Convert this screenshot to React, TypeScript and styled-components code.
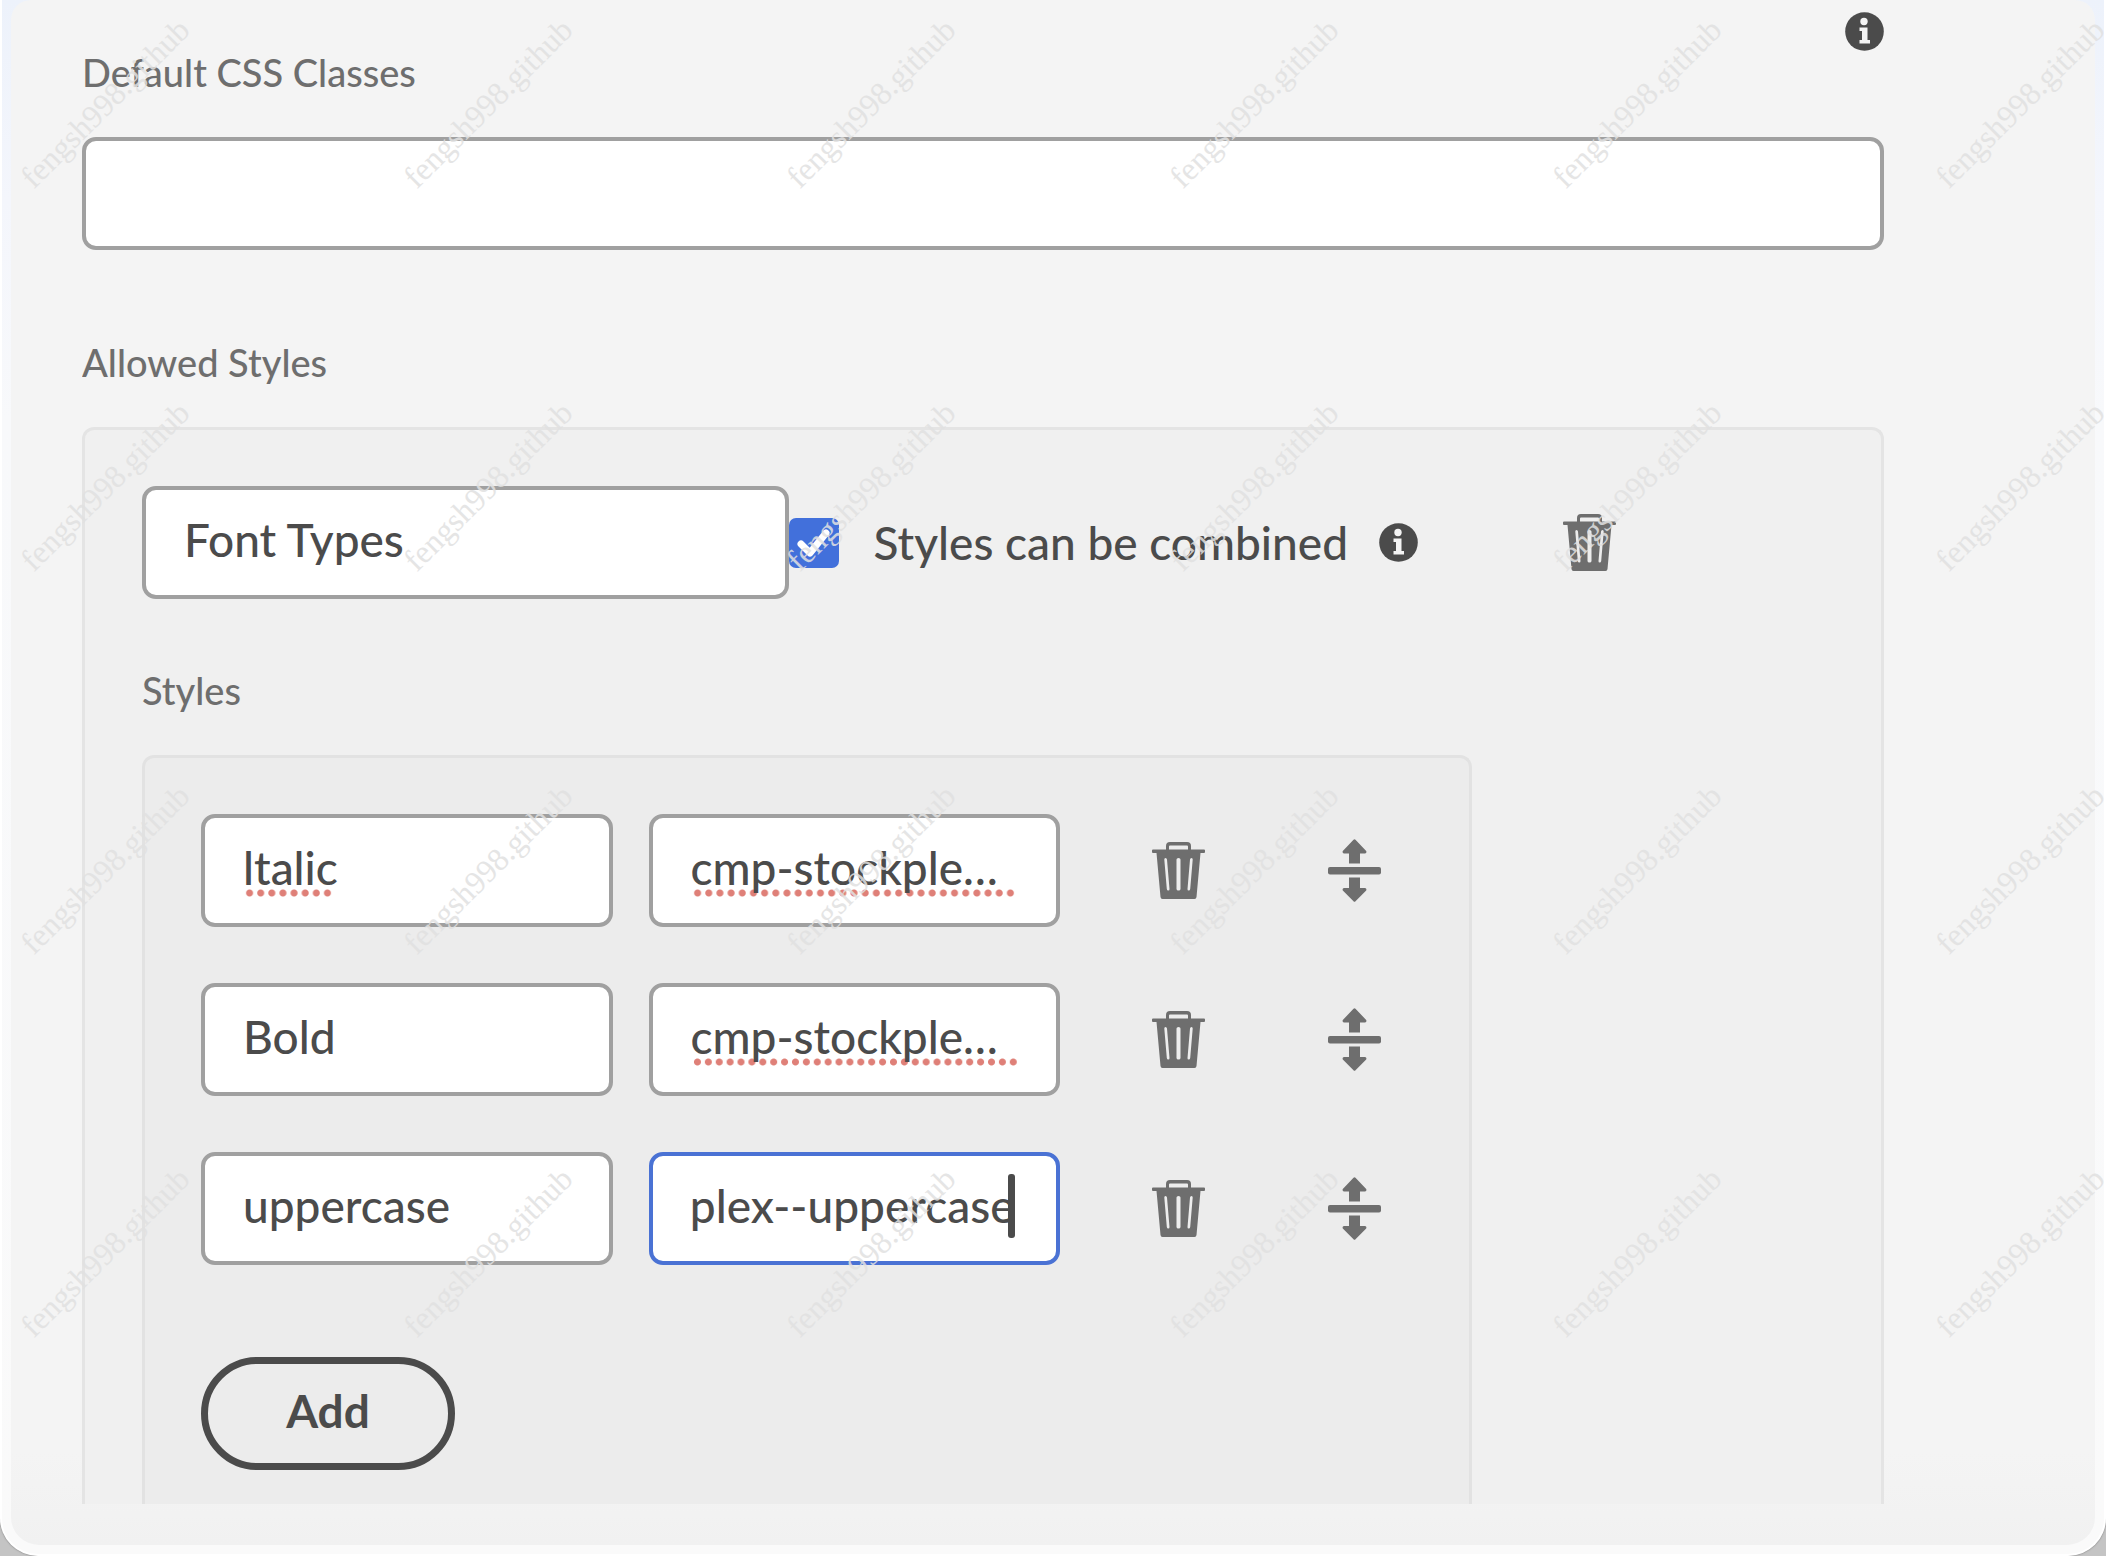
import React, { useEffect, useRef } from "react";
import styled, { createGlobalStyle } from "styled-components";

const GlobalStyle = createGlobalStyle`
  *, *::before, *::after { box-sizing: border-box; }
  body {
    margin: 0;
    background: #c4c4c4;
    font-family: Lato, "Open Sans", sans-serif;
    font-size: 46px;
    line-height: 56px;
    font-weight: 500;
    color: #4b4b4b;
  }
`;

const Window = styled.div`
  position: relative;
  display: flex;
  height: 100vh;
  padding: 0 9px 9px;
  overflow: hidden;
  border: 2px solid #ffffff;
  border-top: 0;
  border-radius: 0 0 38px 38px;
  background: linear-gradient(#edf2fb, #f4f6fc 200px, #f8f9fb 420px, #fafafa);
  box-shadow: 0 0 2px #6b6b6b;
`;

const Dialog = styled.main`
  flex: 1;
  min-width: 0;
  display: flex;
  flex-direction: column;
  padding: 0 211px 41px 71px;
  border-radius: 20px 20px 28px 28px;
  background: linear-gradient(#f4f4f4, #f4f4f4 94%, #f1f1f1);
`;

const Content = styled.form`
  flex: 1;
  min-height: 0;
  display: flex;
  flex-direction: column;
  overflow: hidden;
`;

const FieldHeader = styled.div`
  display: flex;
  justify-content: space-between;
  align-items: flex-start;
  padding: 12px 0 40px;
`;

const Label = styled.label`
  margin-top: 35px;
  font-size: 38px;
  line-height: 50px;
  color: #6e6e6e;
`;

const GroupTitle = styled.h2`
  margin: 0;
  padding: 87px 0 40px;
  font-size: 38px;
  line-height: 50px;
  font-weight: 500;
  color: #6e6e6e;
`;

const SubTitle = styled(GroupTitle)`
  padding-top: 66px;
`;

const FieldRow = styled.div`
  display: flex;
`;

const Field = styled.div<{ $focused?: boolean }>`
  position: relative;
  flex: 1;
  min-width: 0;
  display: flex;
  height: 113px;
  padding-right: ${(p) => (p.$focused ? "4px" : "0")};
  border: 4px solid ${(p) => (p.$focused ? "#4a72d4" : "#a0a0a0")};
  border-radius: 14px;
  background: #ffffff;
`;

const TextInput = styled.input`
  position: relative;
  flex: 1;
  min-width: 0;
  margin: 0 38px;
  padding: 0 0 6px;
  border: 0;
  outline: 0;
  background: transparent;
  font: inherit;
  color: inherit;
  caret-color: transparent;
`;

const Misspelling = styled.span<{ $width: number }>`
  position: absolute;
  left: 39px;
  top: 71px;
  width: ${(p) => p.$width}px;
  height: 8px;
  background: radial-gradient(circle, #df8078 3px, transparent 4px) 0 0 / 11px 8px round;
`;

const Caret = styled.span`
  position: absolute;
  right: 41px;
  top: 18px;
  width: 7px;
  height: 64px;
  border-radius: 3px;
  background: #4b4b4b;
`;

const Panel = styled.section`
  flex: 1;
  display: flex;
  flex-direction: column;
  padding: 56px 57px 0;
  border: 3px solid #e4e4e4;
  border-bottom: 0;
  border-radius: 12px 12px 0 0;
  background: #f0f0f0;
`;

const StylesPanel = styled(Panel)`
  margin-right: 352px;
  padding: 56px 88px 0 56px;
  border-color: #e2e2e2;
  background: #ececec;
`;

const GroupRow = styled.div`
  display: flex;
  align-items: center;
  padding-right: 208px;
`;

const CheckLabel = styled.label`
  display: flex;
  align-items: center;
  gap: 35px;
  margin-right: 31px;
  white-space: nowrap;
`;

const CheckMark = styled.span`
  position: relative;
  display: flex;
  width: 50px;
  height: 50px;
`;

const Checkbox = styled.input`
  appearance: none;
  width: 50px;
  height: 50px;
  margin: 0;
  border-radius: 7px;
  background: #4270db;
`;

const Tick = styled.svg`
  position: absolute;
  inset: 0;
  width: 50px;
  height: 50px;
  pointer-events: none;
`;

const IconButton = styled.button`
  display: flex;
  justify-content: center;
  flex: none;
  width: 53px;
  padding: 0;
  border: 0;
  background: none;
  color: #6e6e6e;
`;

const InfoButton = styled(IconButton)`
  width: 39px;
  color: #4b4b4b;
`;

const GroupDelete = styled(IconButton)`
  margin-left: 145px;
`;

const StyleList = styled.ul`
  display: flex;
  flex-direction: column;
  gap: 56px;
  margin: 0;
  padding: 0;
  list-style: none;
`;

const StyleItem = styled.li`
  display: flex;
  align-items: center;
`;

const Pair = styled.div`
  flex: 1;
  min-width: 0;
  display: grid;
  grid-template-columns: 1fr 1fr;
  gap: 36px;
  margin-right: 92px;
`;

const RowActions = styled.div`
  display: flex;
  align-items: center;
  gap: 123px;
`;

const AddButton = styled.button`
  align-self: flex-start;
  width: 254px;
  height: 113px;
  margin-top: 92px;
  padding: 0 0 6px;
  border: 7px solid #4b4b4b;
  border-radius: 57px;
  background: transparent;
  font: inherit;
  font-weight: 700;
  color: #4b4b4b;
`;

const Watermarks = styled.div`
  position: absolute;
  inset: 1px 0 0 -7px;
  display: grid;
  grid-template-columns: repeat(6, 212px);
  grid-auto-rows: 212px;
  gap: 171px;
  pointer-events: none;
`;

const Watermark = styled.span`
  display: grid;
  place-items: center;
  transform: rotate(-45deg);
  font-family: "Liberation Serif", serif;
  font-size: 32px;
  line-height: 36px;
  font-weight: 400;
  color: #e1e1e1;
  opacity: 0.85;
`;

const InfoIcon = () => (
  <svg width="39" height="39" viewBox="0 0 39 39" aria-hidden="true">
    <circle cx="19.500" cy="19.500" r="19.300" fill="currentColor" />
    <circle cx="19" cy="9.500" r="3.700" fill="#f4f4f4" />
    <path d="M14.500 15.500h8v12.500H25v3.500H14.500v-3.500H17V19h-2.500z" fill="#f4f4f4" />
  </svg>
);

const TrashIcon = () => (
  <svg width="53" height="57" viewBox="0 0 53 57" aria-hidden="true" fill="currentColor">
    <path d="M14 8V4q0-4 4-4h17q4 0 4 4v4h-3V4.500q0-1-1-1H18q-1 0-1 1V8z" />
    <path d="M1 7.500h51q1 0 1 1V10q0 1-1 1h-3.500L44.500 55q-.2 2-2 2h-32q-1.800 0-2-2L4.500 11H1q-1 0-1-1V8.500q0-1 1-1z" />
    <path d="M12.300 17.500q-.1-1.500 1.200-1.500t1.500 1.500L17.500 47q.1 1.500-1.200 1.500t-1.500-1.500zM24.500 17.500q0-1.500 2-1.500t2 1.500V47q0 1.500-2 1.500t-2-1.500zM38 17.500q.2-1.500 1.500-1.500t1.200 1.500L38.200 47q-.2 1.500-1.500 1.500T35.500 47z" fill="#ededed" />
  </svg>
);

const MoveIcon = () => (
  <svg width="53" height="63" viewBox="0 0 53 63" aria-hidden="true" fill="currentColor">
    <path d="M25.500.8q1-1 2 0L38.200 12q.8 2-1.200 2.500H32V24.500H21V14.500H16q-2-.5-1.200-2.500z" />
    <rect y="28" width="53" height="7.500" rx="2" />
    <path d="M21 38.500H32V49H37q2 .5 1.200 2.500L27.500 62.200q-1 1-2 0L14.800 51.500Q14 49.500 16 49H21z" />
  </svg>
);

type RowProps = {
  name: string;
  nameDots?: number;
  classes: string;
  classDots?: number;
  focused?: boolean;
};

const rows: RowProps[] = [
  { name: "ltalic", nameDots: 89, classes: "cmp-stockple…", classDots: 324 },
  { name: "Bold", classes: "cmp-stockple…", classDots: 327 },
  { name: "uppercase", classes: "cmp-stockplex--uppercase", focused: true },
];

function StyleRow({ name, nameDots, classes, classDots, focused }: RowProps) {
  const classInput = useRef<HTMLInputElement>(null);

  useEffect(() => {
    const input = classInput.current;
    if (focused && input) {
      input.focus();
      input.setSelectionRange(input.value.length, input.value.length);
      input.scrollLeft = input.scrollWidth;
    }
  }, [focused]);

  return (
    <StyleItem>
      <Pair>
        <Field>
          {nameDots && <Misspelling $width={nameDots} />}
          <TextInput aria-label="Style name" defaultValue={name} spellCheck={false} />
        </Field>
        <Field $focused={focused}>
          {classDots && <Misspelling $width={classDots} />}
          <TextInput ref={classInput} aria-label="CSS classes" defaultValue={classes} spellCheck={false} />
          {focused && <Caret />}
        </Field>
      </Pair>
      <RowActions>
        <IconButton type="button" aria-label={`Delete ${name}`}>
          <TrashIcon />
        </IconButton>
        <IconButton type="button" aria-label={`Move ${name}`}>
          <MoveIcon />
        </IconButton>
      </RowActions>
    </StyleItem>
  );
}

export default function App() {
  return (
    <>
      <GlobalStyle />
      <Window>
        <Dialog>
          <Content>
            <FieldHeader>
              <Label htmlFor="default-classes">Default CSS Classes</Label>
              <InfoButton type="button" aria-label="About default CSS classes">
                <InfoIcon />
              </InfoButton>
            </FieldHeader>
            <FieldRow>
              <Field>
                <TextInput id="default-classes" spellCheck={false} />
              </Field>
            </FieldRow>
            <GroupTitle>Allowed Styles</GroupTitle>
            <Panel>
              <GroupRow>
                <Field>
                  <TextInput aria-label="Style group name" defaultValue="Font Types" spellCheck={false} />
                </Field>
                <CheckLabel>
                  <CheckMark>
                    <Checkbox type="checkbox" defaultChecked />
                    <Tick viewBox="0 0 50 50" aria-hidden="true">
                      <path d="M12 26l9 9L37 15" fill="none" stroke="#ffffff" strokeWidth="7" strokeLinecap="round" strokeLinejoin="round" />
                    </Tick>
                  </CheckMark>
                  Styles can be combined
                </CheckLabel>
                <InfoButton type="button" aria-label="About combined styles">
                  <InfoIcon />
                </InfoButton>
                <GroupDelete type="button" aria-label="Delete style group">
                  <TrashIcon />
                </GroupDelete>
              </GroupRow>
              <SubTitle>Styles</SubTitle>
              <StylesPanel>
                <StyleList>
                  {rows.map((row) => (
                    <StyleRow key={row.name} {...row} />
                  ))}
                </StyleList>
                <AddButton type="button">Add</AddButton>
              </StylesPanel>
            </Panel>
          </Content>
        </Dialog>
        <Watermarks aria-hidden="true">
          {Array.from({ length: 24 }, (_, i) => (
            <Watermark key={i}>fengsh998.github</Watermark>
          ))}
        </Watermarks>
      </Window>
    </>
  );
}
